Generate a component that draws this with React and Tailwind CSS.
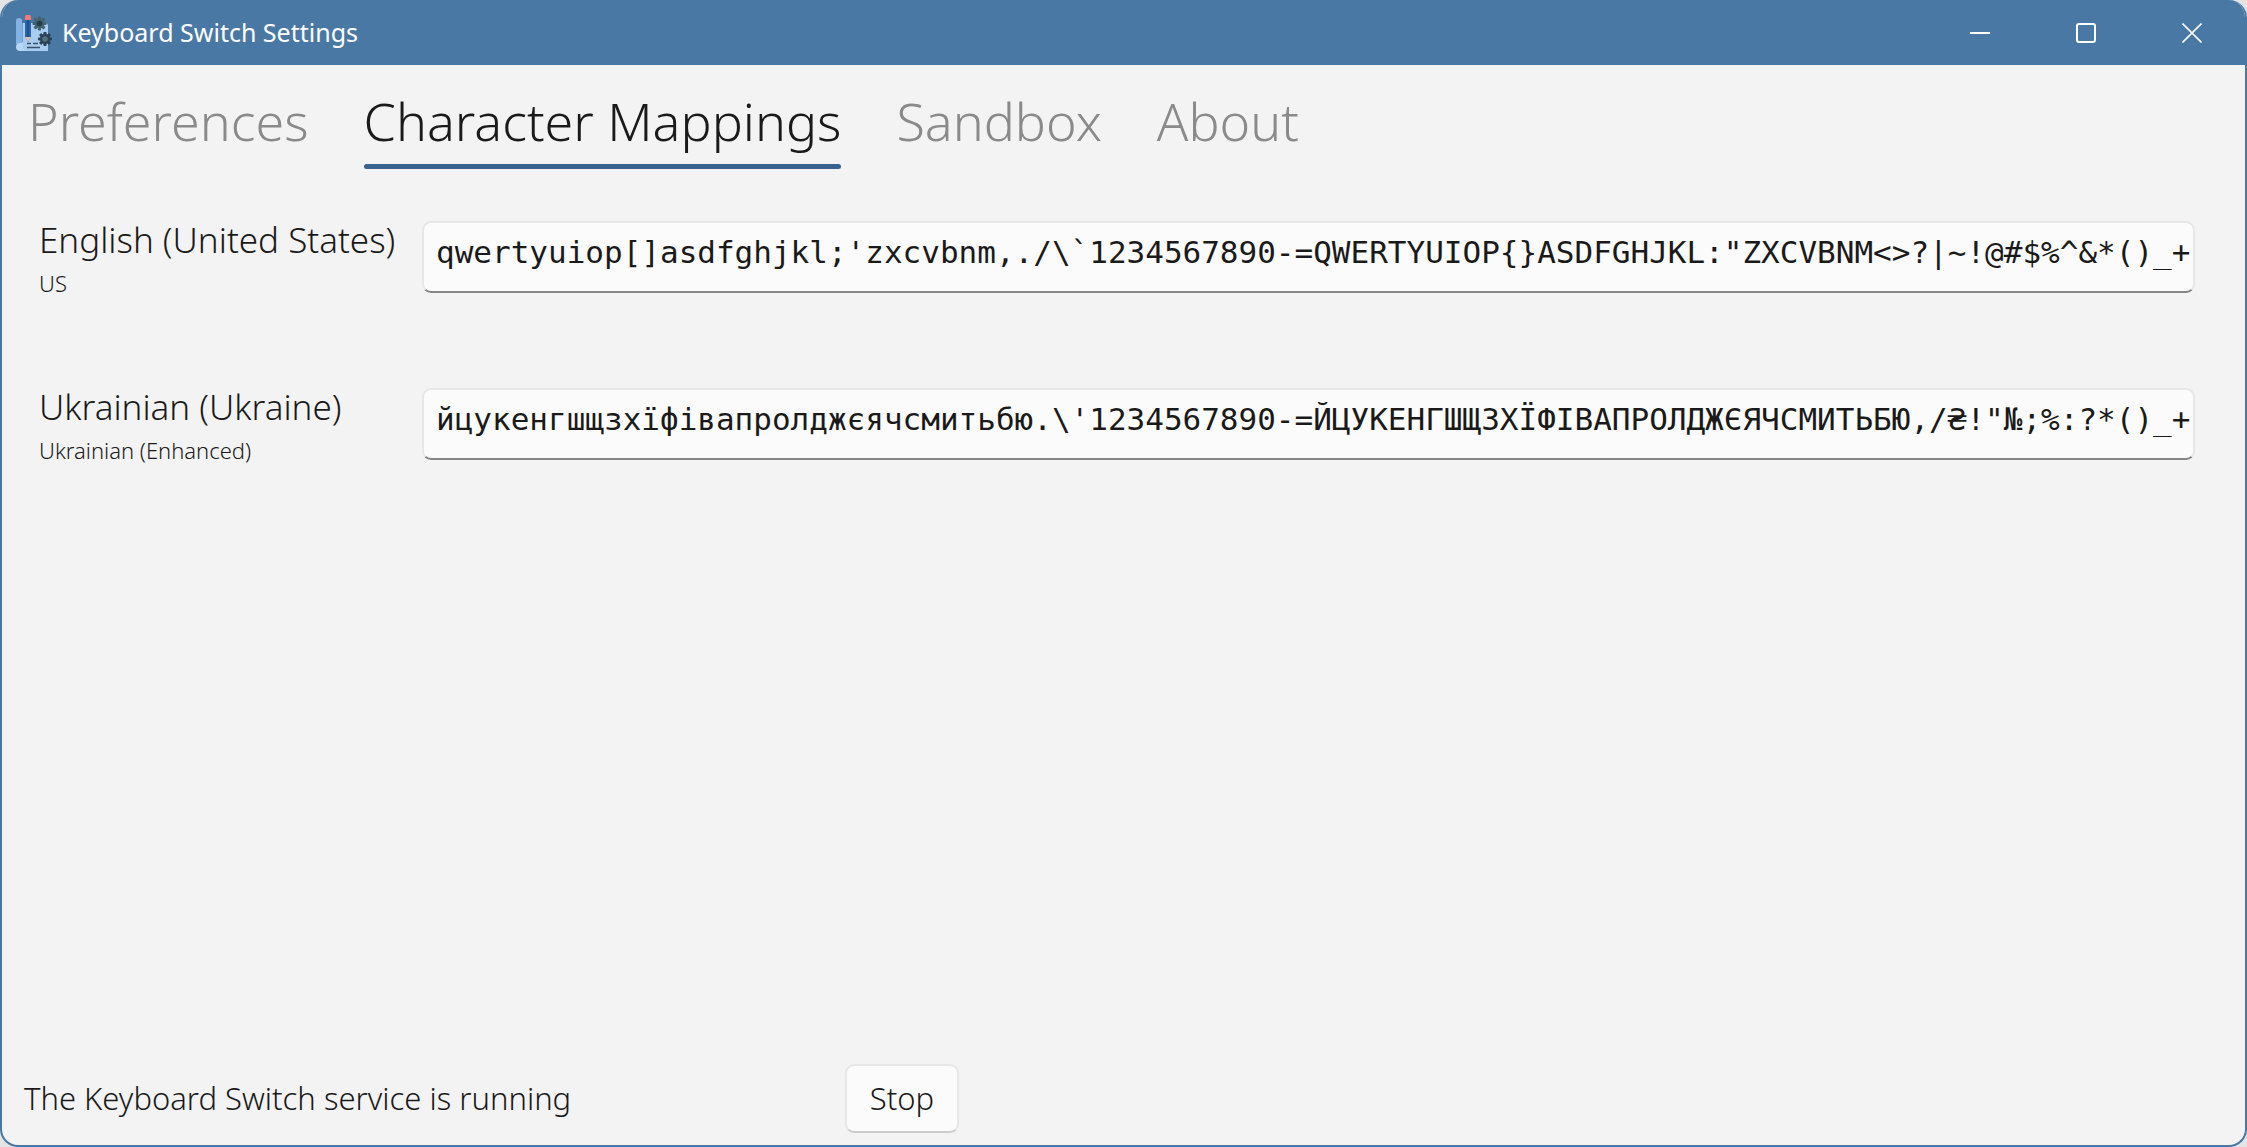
const LATIN = "qwertyuiop[]asdfghjkl;'zxcvbnm,./\\`1234567890-=QWERTYUIOP{}ASDFGHJKL:\"ZXCVBNM<>?|~!@#$%^&*()_+";
const CYRILLIC = "йцукенгшщзхїфівапролджєячсмитьбю.\\'1234567890-=ЙЦУКЕНГШЩЗХЇФІВАПРОЛДЖЄЯЧСМИТЬБЮ,/₴!\"№;%:?*()_+";

const tabs = ["Preferences", "Character Mappings", "Sandbox", "About"];

const layouts = [
  { id: "en-us", language: "English (United States)", name: "US", characters: LATIN },
  { id: "uk-ua", language: "Ukrainian (Ukraine)", name: "Ukrainian (Enhanced)", characters: CYRILLIC },
];

function Gear({ cx, cy, r, body, hole }) {
  return (
    <g>
      {[0, 45, 90, 135].map((a) => (
        <rect key={a} x={cx - 1.6} y={cy - r} width="3.2" height={r * 2} rx="0.8" fill={body} transform={`rotate(${a} ${cx} ${cy})`} />
      ))}
      <circle cx={cx} cy={cy} r={r - 2} fill={body} />
      <circle cx={cx} cy={cy} r="2.8" fill={hole} />
    </g>
  );
}

function AppIcon() {
  return (
    <svg className="size-9" viewBox="0 0 36 36" aria-hidden="true">
      <path d="M3 8h26a3 3 0 0 1 3 3v25H3z" fill="#a8cdf0" />
      <path d="M0 6a3 3 0 0 1 6 0v23H0z" fill="#83b3e3" />
      <path d="M6 8h1v19H6z" fill="#6b9fd6" />
      <path d="M0 32a4 4 0 0 1 4-4h3v4a4 4 0 0 0 3 4H4a4 4 0 0 1-4-4z" fill="#b5d7f5" />
      <path d="M9 4h6v18l-3 5-3-5z" fill="#2d66a8" />
      <path d="M11 4h2v18h-2z" fill="#1f4f8c" />
      <path d="M9 22h6l-3 5z" fill="#d8c5b4" />
      <path d="M9 5V2.500a3 3 0 0 1 6 0V5z" fill="#f47a78" />
      <path d="M11 28.500h4M17 28.500h5M11 32.500h13" stroke="#3d5268" strokeWidth="1.400" />
      <Gear cx={23.5} cy={8.5} r={7} body="#44646f" hole="#223c50" />
      <Gear cx={29} cy={24} r={7} body="#2c4256" hole="#54737c" />
    </svg>
  );
}

function CaptionButton({ label, children }) {
  return (
    <button type="button" aria-label={label} className="flex h-16 w-[106px] items-center justify-center">
      <svg className="size-5" viewBox="0 0 20 20" fill="none" stroke="#ffffff" strokeWidth="2" aria-hidden="true">
        {children}
      </svg>
    </button>
  );
}

export default function App() {
  return (
    <div className="min-h-screen bg-[#e4e4e4] font-['Noto_Sans',sans-serif] text-[#1a1a1a]">
      <div className="flex min-h-screen flex-col overflow-hidden rounded-[18px] border-2 border-t-0 border-[#4a78a4] bg-[#f3f3f3]">
        <header className="flex h-[65px] items-center bg-[#4a78a4] pl-[14px] text-white">
          <AppIcon />
          <h1 className="ml-2.5 flex-1 text-[25px]">Keyboard Switch Settings</h1>
          <CaptionButton label="Minimize"><path d="M0 10h20" /></CaptionButton>
          <CaptionButton label="Maximize"><rect x="1" y="1" width="18" height="18" rx="2" /></CaptionButton>
          <CaptionButton label="Close"><path d="M0.500 0.500l19 19M19.500 0.500l-19 19" strokeWidth="1.600" /></CaptionButton>
        </header>

        <nav className="flex gap-[55px] pl-[26px] pt-[18px] text-[52px] font-light leading-[76px]" role="tablist">
          {tabs.map((tab) => {
            const active = tab === "Character Mappings";
            return (
              <button
                key={tab}
                type="button"
                role="tab"
                aria-selected={active}
                className={active ? "flex flex-col text-[#1a1a1a]" : "flex flex-col text-[#8a8a8a]"}
              >
                {tab}
                {active && <span className="mt-[5px] h-[5px] w-full rounded-full bg-[#3a628e]" />}
              </button>
            );
          })}
        </nav>

        <main className="flex flex-1 flex-col gap-12 pl-[37px] pr-[50px] pt-[52px]">
          {layouts.map(({ id, language, name, characters }) => (
            <div key={id} className="flex h-[119px] items-start">
              <label htmlFor={id} className="w-[383px] shrink-0 font-light">
                <span className="block text-[35px] leading-[38px]">{language}</span>
                <span className="block text-[22px] leading-[48px]">{name}</span>
              </label>
              <input
                id={id}
                type="text"
                defaultValue={characters}
                spellCheck={false}
                className="h-[72px] min-w-0 flex-1 rounded-[9px] border-2 border-[#e7e7e7] border-b-[#868686] bg-[#fbfbfb] pb-2.5 pl-3 pr-0 font-['DejaVu_Sans_Mono',monospace] text-[31px] outline-none"
              />
            </div>
          ))}
        </main>

        <footer className="flex items-center pb-3 pl-[22px] text-[31px] font-light">
          <p className="w-[821px]">The Keyboard Switch service is running</p>
          <button type="button" className="h-[69px] w-[114px] rounded-[9px] border-2 border-[#e7e7e7] border-b-[#cccccc] bg-[#fbfbfb]">
            Stop
          </button>
        </footer>
      </div>
    </div>
  );
}
